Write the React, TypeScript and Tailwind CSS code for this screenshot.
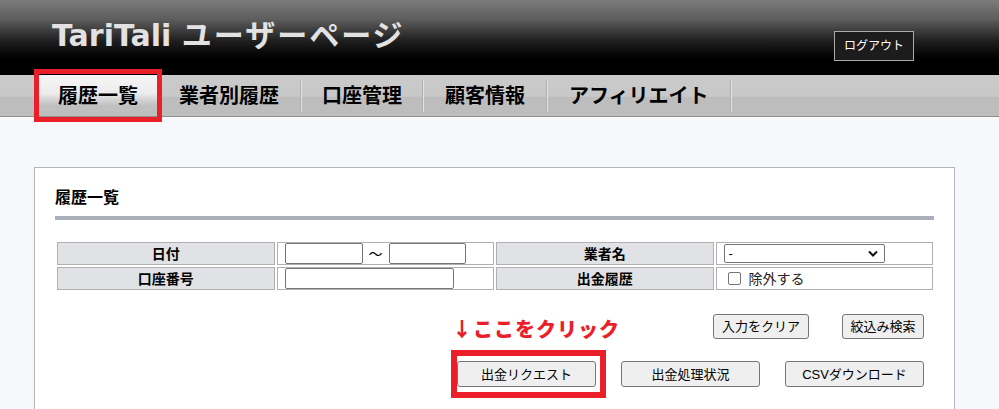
import React from "react";

const jp = "font-['Liberation_Sans','Noto_Sans_CJK_JP',sans-serif]";

function Btn({ children, className = "" }: { children: React.ReactNode; className?: string }) {
  return (
    <button
      className={`bg-[#efefef] border border-[#767676] rounded-[3px] text-[13px] leading-none text-black flex items-center justify-center ${className}`}
    >
      {children}
    </button>
  );
}

const tabs = [
  { t: "業者別履歴", p: "px-[21px]" },
  { t: "口座管理", p: "px-[20px]" },
  { t: "顧客情報", p: "px-[21px]" },
  { t: "アフィリエイト", p: "px-[21px]" },
];

export default function App() {
  return (
    <div className={`w-[999px] h-[409px] overflow-hidden bg-[#f7f8fc] relative ${jp}`}>
      {/* header */}
      <div className="h-[75px] bg-[linear-gradient(to_bottom,#7b7b7b_0%,#5e5e5e_25%,#1e1e1e_55%,#000_78%,#000_100%)] flex justify-between items-start pl-[52px] pr-[85px]">
        <div className="pt-[18px] text-[30px] leading-[36px] font-bold text-[#e2e2e2] font-['DejaVu_Sans','Noto_Sans_CJK_JP',sans-serif]">
          TariTali <span className="tracking-[2px]">ユーザーページ</span>
        </div>
        <div className="mt-[31px] w-[80px] h-[30px] border border-[#aaaaaa] bg-[#1c1c1c] text-white text-[12px] flex items-center justify-center">
          ログアウト
        </div>
      </div>

      {/* nav */}
      <div className="h-[42px] bg-[linear-gradient(to_bottom,#cacaca_0%,#c8c8c8_52%,#bdbdbd_54%,#bdbdbd_100%)] border-b border-[#8f8f8f] flex pl-[38px]">
        <div className="w-[120px] h-full flex items-center justify-center text-[20px] font-bold text-black bg-[linear-gradient(to_bottom,#f5f5f5_0%,#ececec_45%,#d4d4d4_60%,#c0c0c0_75%,#bdbdbd_100%)]">
          履歴一覧
        </div>
        {tabs.map(({ t, p }) => (
          <div key={t} className="h-full flex items-center">
            <div className={`${p} text-[20px] font-bold text-black`}>{t}</div>
            <div className="w-[2px] h-[33px] bg-[#e2e2e2] border-l border-[#b0b0b0]" />
          </div>
        ))}
      </div>

      {/* panel */}
      <div className="mt-[50px] ml-[34px] w-[921px] h-[300px] bg-white border border-[#b4b4bc] px-[20px] pt-[19px]">
        <div className="text-[16px] leading-[22px] font-bold text-black">履歴一覧</div>
        <div className="mt-[7px] h-[4px] bg-[#aab0b8]" />

        <table className="mt-[20px] w-[880px] table-fixed border-separate border-spacing-[2px] text-[14px] text-black">
          <tbody>
            <tr>
              <td className="h-[23px] p-0 border border-[#b0b0b0] bg-[#e1e2e6] text-center font-bold leading-none">日付</td>
              <td className="h-[23px] p-0 pl-[7px] border border-[#b0b0b0]">
                <div className="flex items-center">
                  <span className="block w-[78px] h-[21px] border border-[#767676] rounded-[2px] bg-white" />
                  <span className="w-[26px] text-center text-[14px] leading-none">～</span>
                  <span className="block w-[77px] h-[21px] border border-[#767676] rounded-[2px] bg-white" />
                </div>
              </td>
              <td className="h-[23px] p-0 border border-[#b0b0b0] bg-[#e1e2e6] text-center font-bold leading-none">業者名</td>
              <td className="h-[23px] p-0 pl-[7px] border border-[#b0b0b0]">
                <div className="w-[161px] h-[19px] border border-[#767676] rounded-[2px] bg-white flex items-center justify-between pl-[4px] pr-[6px]">
                  <span className="text-[13px] leading-none">-</span>
                  <svg width="10" height="7" viewBox="0 0 10 7">
                    <path d="M1 1.5 L5 5.5 L9 1.5" fill="none" stroke="#111" strokeWidth="2" />
                  </svg>
                </div>
              </td>
            </tr>
            <tr>
              <td className="h-[23px] p-0 border border-[#b0b0b0] bg-[#e1e2e6] text-center font-bold leading-none">口座番号</td>
              <td className="h-[23px] p-0 pl-[7px] border border-[#b0b0b0]">
                <span className="block w-[169px] h-[21px] border border-[#767676] rounded-[2px] bg-white" />
              </td>
              <td className="h-[23px] p-0 border border-[#b0b0b0] bg-[#e1e2e6] text-center font-bold leading-none">出金履歴</td>
              <td className="h-[23px] p-0 border border-[#b0b0b0]">
                <div className="flex items-center pl-[11px]">
                  <span className="block w-[13px] h-[13px] border border-[#767676] rounded-[2px] bg-white" />
                  <span className="ml-[8px] text-[14px] leading-none text-[#222]">除外する</span>
                </div>
              </td>
            </tr>
          </tbody>
        </table>

        <div className="mt-[22px] flex justify-end gap-[33px] pr-[10px]">
          <Btn className="w-[96px] h-[25px]">入力をクリア</Btn>
          <Btn className="w-[82px] h-[25px]">絞込み検索</Btn>
        </div>
        <div className="mt-[22px] flex justify-end gap-[25px] pr-[10px]">
          <Btn className="w-[139px] h-[26px]">出金リクエスト</Btn>
          <Btn className="w-[139px] h-[26px]">出金処理状況</Btn>
          <Btn className="w-[139px] h-[26px]">CSVダウンロード</Btn>
        </div>
      </div>

      {/* annotations */}
      <div className="absolute left-[34px] top-[69px] w-[128px] h-[53px] border-[5px] border-[#ea1f2a]" />
      <div className="absolute left-[452px] top-[316px] text-[20px] leading-[26px] font-black tracking-[1px] text-[#ea1f2a] font-['Noto_Sans_CJK_JP',sans-serif]">
        ↓ここをクリック
      </div>
      <div className="absolute left-[451px] top-[350px] w-[155px] h-[48px] border-[6px] border-[#ea1f2a]" />
    </div>
  );
}
